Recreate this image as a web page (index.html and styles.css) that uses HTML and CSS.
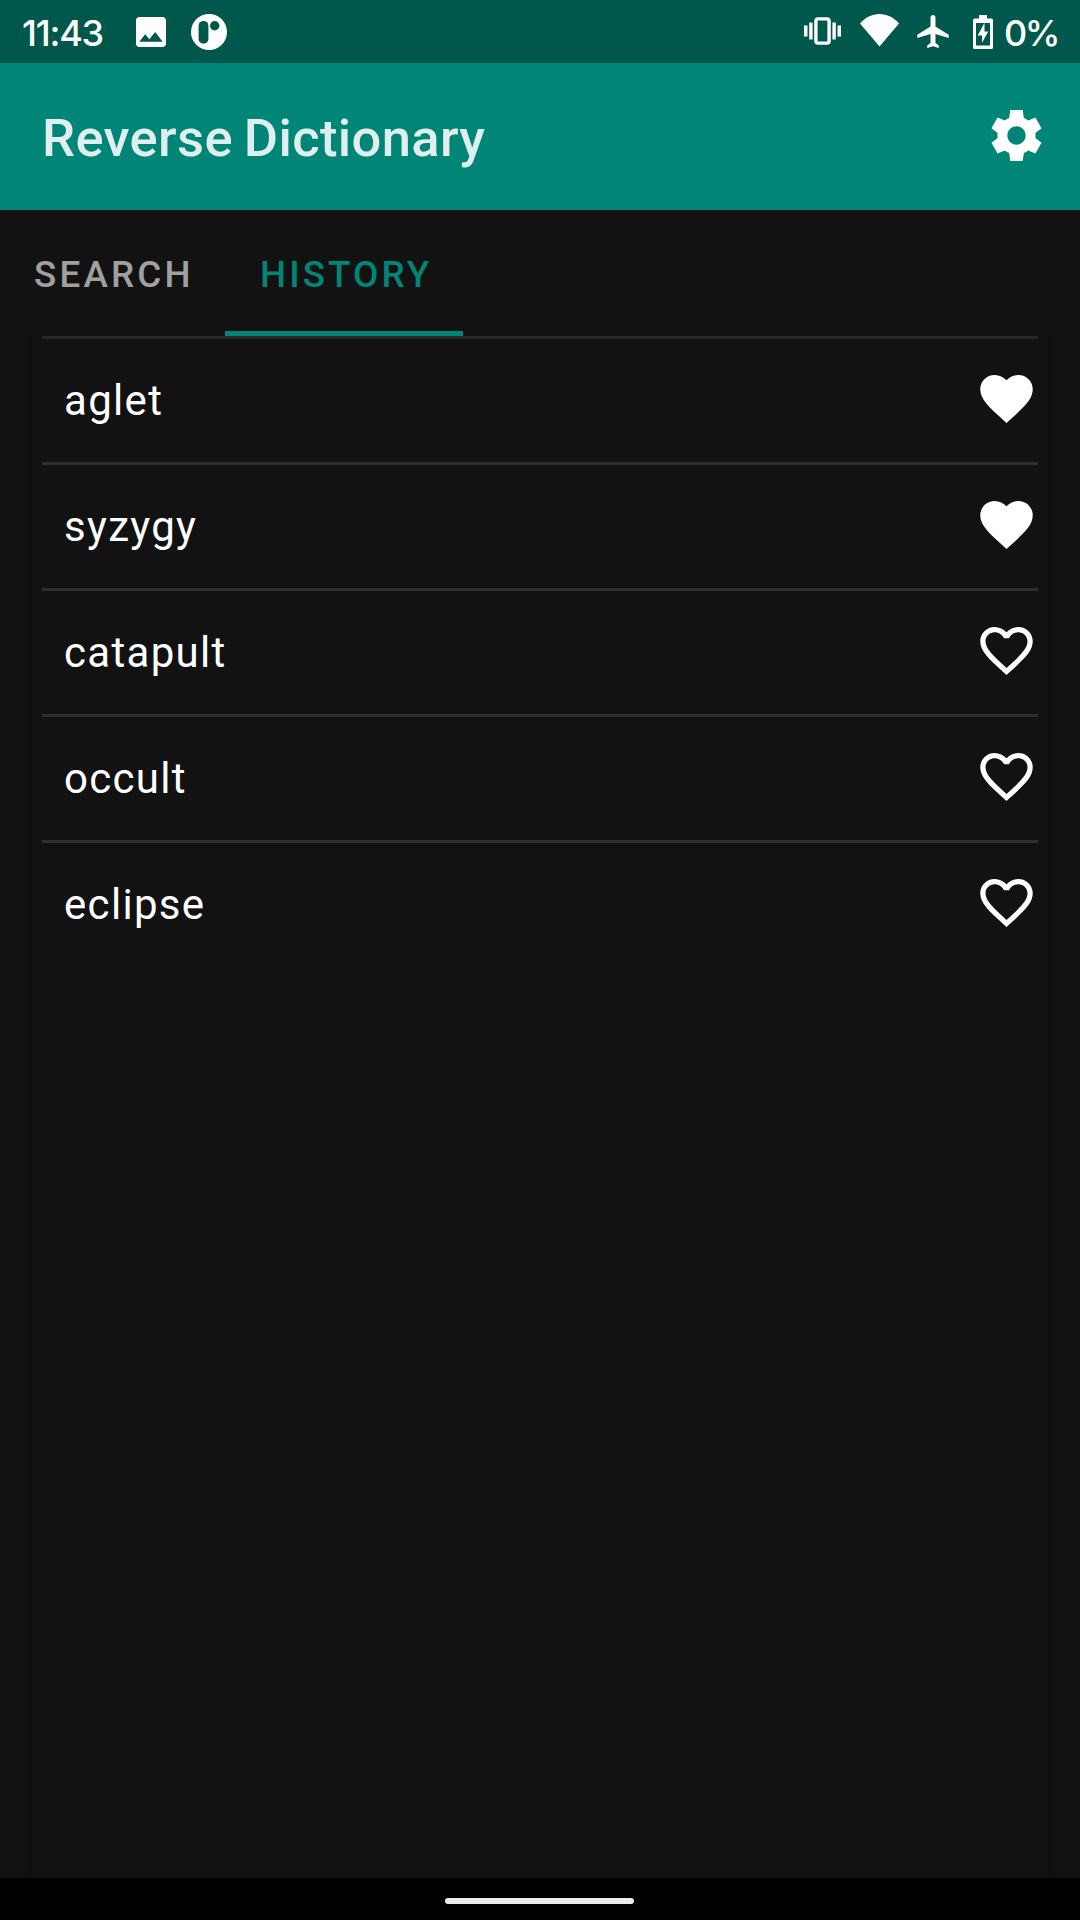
FILE: index.html
```html
<!DOCTYPE html>
<html lang="en">
<head>
<meta charset="utf-8">
<title>Reverse Dictionary</title>
<link rel="stylesheet" href="styles.css">
</head>
<body>
<svg width="0" height="0" class="defs">
  <symbol id="heart" viewBox="0 0 24 24"><path d="M12 21.35l-1.45-1.32C5.4 15.36 2 12.28 2 8.5 2 5.42 4.42 3 7.5 3c1.74 0 3.41.81 4.5 2.09C13.09 3.81 14.76 3 16.5 3 19.58 3 22 5.42 22 8.5c0 3.78-3.4 6.86-8.55 11.54L12 21.35z"/></symbol>
  <symbol id="heart-outline" viewBox="0 0 24 24"><path d="M16.5 3c-1.74 0-3.41.81-4.5 2.09C10.91 3.81 9.24 3 7.5 3 4.42 3 2 5.42 2 8.5c0 3.78 3.4 6.86 8.55 11.54L12 21.35l1.45-1.32C18.6 15.36 22 12.28 22 8.5 22 5.42 19.58 3 16.5 3zm-4.4 15.55l-.1.1-.1-.1C7.14 14.24 4 11.39 4 8.5 4 6.5 5.5 5 7.5 5c1.54 0 3.04.99 3.57 2.36h1.87C13.46 5.99 14.96 5 16.5 5c2 0 3.5 1.5 3.5 3.5 0 2.89-3.14 5.74-7.9 10.05z"/></symbol>
</svg>
<div class="screen">
  <div class="status-bar">
    <span class="clock">11:43</span>
    <svg class="ic-picture" viewBox="3 3 18 18"><path d="M21 19V5c0-1.1-.9-2-2-2H5c-1.100 0-2 .9-2 2v14c0 1.100.9 2 2 2h14c1.100 0 2-.9 2-2zM8.500 13.300l2.500 3.010L14.500 12l4.500 5.800H5l3.500-4.500z"/></svg>
    <svg class="ic-app" viewBox="0 0 36 36"><circle cx="18" cy="18" r="18"/><rect class="cut" x="7.600" y="6.900" width="9.800" height="22.900" rx="4.900"/><circle class="cut" cx="23.700" cy="11.700" r="4.700"/></svg>
    <div class="system-icons">
      <svg class="ic-vibrate" viewBox="0 0 37 28"><rect x="11.900" y="1.900" width="13.200" height="24.200" rx="2" fill="none" stroke="currentColor" stroke-width="3.400"/><path d="M0 8.500h3.500v11H0zM5.200 5.500h3.400v17H5.200zM28.400 5.500h3.400v17h-3.400zM33.500 8.500H37v11h-3.500z"/></svg>
      <svg class="ic-wifi" viewBox="0 0 39 33"><path d="M0 9.500C5.200 3.500 12 0 19.500 0S33.800 3.500 39 9.500L19.500 32.500z"/></svg>
      <svg class="ic-plane" viewBox="2 2 19 20"><path d="M21 16v-2l-8-5V3.500c0-.83-.67-1.500-1.500-1.500S10 2.670 10 3.500V9l-8 5v2l8-2.500V19l-2 1.500V22l3.500-1 3.500 1v-1.500L13 19v-5.500l8 2.500z"/></svg>
      <svg class="ic-battery" viewBox="0 0 20 34"><path fill-rule="evenodd" d="M6 0h8v3.500h4.500q1.500 0 1.500 1.500v27.500q0 1.500-1.500 1.500h-17q-1.500 0-1.500-1.500v-27.500q0-1.500 1.500-1.500h4.500zM3 8v22.500h14V8z"/><path d="M11.500 7.700v8.800H15.300L9 27.800V20.500H4.700z"/></svg>
      <span class="level">0%</span>
    </div>
  </div>
  <header class="app-bar">
    <h1>Reverse Dictionary</h1>
    <svg class="ic-settings" viewBox="0 0 24 24"><path d="M19.430 12.980c.04-.32.07-.64.07-.98s-.03-.66-.07-.98l2.400-1.880L19.450 4.950l-2.870 1.150c-.52-.4-1.080-.73-1.690-.98L14.450 2h-4.900l-.44 3.070c-.61.25-1.170.59-1.690.98L4.550 4.950 2.150 9.140l2.420 1.880c-.04.32-.07.65-.07.98s.03.66.07.98L2.150 14.860l2.400 4.190 2.870-1.150c.52.4 1.080.73 1.690.98L9.550 22h4.900l.44-3.070c.61-.25 1.170-.59 1.690-.98l2.870 1.100 2.380-4.190zM12 15.600c-1.990 0-3.600-1.610-3.600-3.600s1.610-3.600 3.600-3.600 3.600 1.610 3.600 3.600-1.610 3.600-3.600 3.600z"/></svg>
  </header>
  <nav class="tabs">
    <a class="tab">SEARCH</a>
    <a class="tab active">HISTORY</a>
  </nav>
  <main class="content">
    <ul class="history">
      <li><span>aglet</span><svg><use href="#heart"/></svg></li>
      <li><span>syzygy</span><svg><use href="#heart"/></svg></li>
      <li><span>catapult</span><svg><use href="#heart-outline"/></svg></li>
      <li><span>occult</span><svg><use href="#heart-outline"/></svg></li>
      <li><span>eclipse</span><svg><use href="#heart-outline"/></svg></li>
    </ul>
  </main>
  <div class="nav-bar"><div class="handle"></div></div>
</div>
</body>
</html>
```
FILE: styles.css
```css
* { box-sizing: border-box; }
body { margin: 0; background: #121212; color: #fff; font-family: Roboto, sans-serif; }
svg { display: block; fill: currentColor; flex: none; }
.defs { display: none; }
.screen { width: 1080px; height: 1920px; display: flex; flex-direction: column; overflow: hidden; }

.status-bar {
  height: 63px; flex: none; background: #00574b;
  display: flex; align-items: center; padding: 0 22px;
  font: 550 36px/42px Inter, sans-serif;
}
.clock { width: 114px; letter-spacing: -1.2px; margin-top: 2px; }
.ic-picture { width: 30px; height: 30px; }
.ic-app { width: 36px; height: 36px; margin-left: 25px; }
.cut { fill: #00574b; }
.system-icons { margin-left: auto; display: flex; align-items: center; }
.ic-vibrate { width: 37px; height: 28px; margin-top: -1px; }
.ic-wifi { width: 39px; height: 33px; margin-left: 19px; margin-top: -2px; }
.ic-plane { width: 32px; height: 33px; margin-left: 18px; }
.ic-battery { width: 20px; height: 34px; margin-left: 24px; }
.level { width: 54px; margin: 2px 0 0 11px; letter-spacing: -2.5px; white-space: nowrap; }

.app-bar {
  height: 147px; flex: none; background: #018577;
  display: flex; align-items: center; justify-content: space-between;
  padding: 0 33px 0 42px;
}
.app-bar h1 { margin: 3px 0 0; font-size: 52.5px; font-weight: 500; line-height: 63px; letter-spacing: 0.36px; word-spacing: -2.5px; color: #deefed; }
.ic-settings { width: 61px; height: 61px; margin-top: -2px; }

.tabs { height: 126px; flex: none; display: flex; }
.tab {
  padding: 0 0 0 34px; line-height: 130px;
  font-size: 36.75px; font-weight: 500; letter-spacing: 3.2px; color: #a0a0a0;
}
.tab:first-child { width: 225px; }
.tab.active { width: 238px; padding-left: 35px; letter-spacing: 3.1px; color: #018577; border-bottom: 5px solid #018577; }

.content { flex: 1; padding: 0 32px; overflow: hidden; }
.history {
  margin: 0; padding: 0 10px; height: 100%; list-style: none;
  background: #121212; box-shadow: 0 0 14px rgba(0, 0, 0, 0.3);
}
.history li {
  height: 126px; border-top: 3px solid #2e2e2e;
  display: flex; align-items: center; justify-content: space-between;
  padding: 0 0 0 22px; font-size: 42px; letter-spacing: 1.31px;
}
.history li:first-child { border-color: #272727; }
.history svg { width: 63px; height: 63px; margin-top: -4px; }

.nav-bar { height: 42px; flex: none; background: #000; display: flex; justify-content: center; padding: 20px 2px 0 0; }
.handle { width: 189px; height: 6px; border-radius: 3px; background: #ebebeb; }
```
